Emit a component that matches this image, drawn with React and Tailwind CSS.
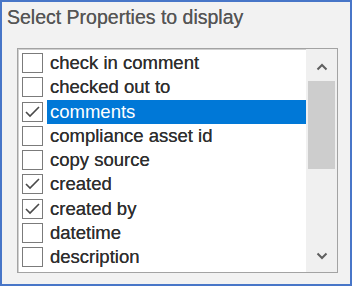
import React from "react";

const items = [
  { name: "check in comment", checked: false },
  { name: "checked out to", checked: false },
  { name: "comments", checked: true, selected: true },
  { name: "compliance asset id", checked: false },
  { name: "copy source", checked: false },
  { name: "created", checked: true },
  { name: "created by", checked: true },
  { name: "datetime", checked: false },
  { name: "description", checked: false },
];

const Chevron = ({ up }) => (
  <svg width="12" height="8" viewBox="0 0 12 8">
    <polyline
      points={up ? "1.5,6.5 6,2 10.5,6.5" : "1.5,1.5 6,6 10.5,1.5"}
      fill="none"
      stroke="#5f5f5f"
      strokeWidth="2"
    />
  </svg>
);

const CheckBox = ({ checked }) => (
  <div className="w-[21px] h-[20px] shrink-0 border border-[#7b7b7b] bg-white flex items-center justify-center">
    {checked && (
      <svg width="17" height="14" viewBox="0 0 17 14">
        <polyline
          points="2,7 6,11 15,2"
          fill="none"
          stroke="#4a4a4a"
          strokeWidth="1.6"
        />
      </svg>
    )}
  </div>
);

export default function App() {
  return (
    <div
      className="w-[352px] h-[286px] border-2 border-[#4876c8] bg-[#f2f2f2] flex flex-col"
      style={{ fontFamily: '"Liberation Sans", Arial, sans-serif' }}
    >
      <div className="pl-[5px] pt-[5px] text-[19.5px] leading-[20px] text-[#555555] [text-shadow:0_0_0.5px_#666]">
        Select Properties to display
      </div>

      <div className="ml-[15px] mt-[21px] w-[321px] h-[225px] border border-[#a3a3a3] bg-white flex">
        <div className="flex-1 border-l border-t border-[#d0d0d0] flex flex-col pt-[1px]">
          {items.map((item) => (
            <div key={item.name} className="h-[24.25px] flex items-center pl-[3px]">
              <CheckBox checked={item.checked} />
              <div
                className={`ml-[4px] h-[24px] flex-1 flex items-center pl-[3px] text-[18.5px] leading-[22px] whitespace-nowrap ${
                  item.selected
                    ? "bg-[#0078d7] text-white"
                    : "text-[#2e2e2e] [text-shadow:0_0_0.5px_#444]"
                }`}
              >
                {item.name}
              </div>
            </div>
          ))}
        </div>

        <div className="w-[31px] bg-[#f0f0f0] flex flex-col">
          <div className="h-[32px] flex items-center justify-center pt-[4px]">
            <Chevron up />
          </div>
          <div className="flex-1 px-[2px]">
            <div className="h-[88px] bg-[#cdcdcd]" />
          </div>
          <div className="h-[32px] flex items-center justify-center">
            <Chevron />
          </div>
        </div>
      </div>
    </div>
  );
}
